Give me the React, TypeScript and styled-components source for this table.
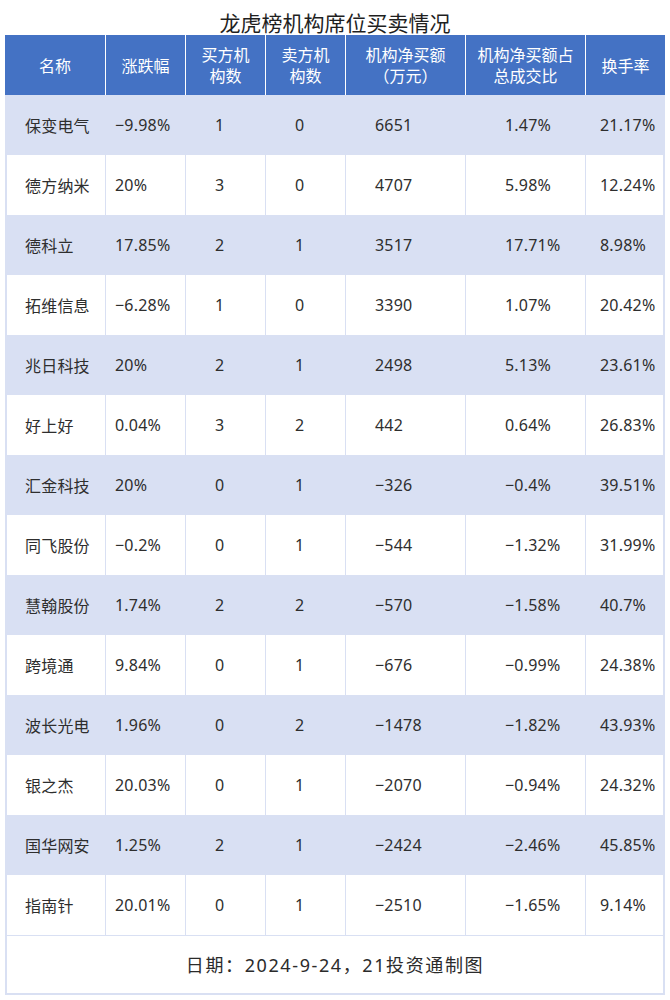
import React from "react";
import styled, { createGlobalStyle } from "styled-components";

const Global = createGlobalStyle`
  html, body { margin: 0; padding: 0; background: #ffffff; }
  body { font-family: "Noto Sans", "Noto Sans CJK SC", sans-serif; }
  * { box-sizing: border-box; }
`;

const COLS = "100px 80px 80px 80px 120px 120px 80px";
const BAND = "#d9e0f3";
const PADS = [18, 9, 29, 29, 29, 39, 14];

const Page = styled.div`
  width: 670px;
  padding: 0 5px;
`;

const Title = styled.div`
  height: 35px;
  padding-top: 10px;
  line-height: 25px;
  text-align: center;
  font-size: 21px;
  color: #1f1f1f;
  font-family: "Noto Sans CJK SC", sans-serif;
`;

const Table = styled.div`
  width: 660px;
  display: flex;
  flex-direction: column;
`;

const HeadRow = styled.div`
  display: grid;
  grid-template-columns: ${COLS};
  height: 60px;
  background: #4472c4;
`;

const HeadCell = styled.div<{ $first?: boolean }>`
  display: flex;
  align-items: center;
  justify-content: center;
  text-align: center;
  color: #ffffff;
  font-size: 16px;
  line-height: 21px;
  font-family: "Noto Sans CJK SC", sans-serif;
  text-spacing-trim: space-all;
  border-left: ${(p) => (p.$first ? "none" : "1px solid #ffffff")};
`;

const Row = styled.div<{ $band: boolean }>`
  display: grid;
  grid-template-columns: ${COLS};
  height: 60px;
  background: ${(p) => (p.$band ? BAND : "#ffffff")};
`;

const Cell = styled.div<{ $pad: number; $first?: boolean; $last?: boolean }>`
  display: flex;
  align-items: center;
  padding-left: ${(p) => p.$pad}px;
  font-size: 16px;
  color: #2e2e2e;
  white-space: nowrap;
  letter-spacing: 0.2px;
  border-left: ${(p) => (p.$first ? `2px solid ${BAND}` : `1px solid ${BAND}`)};
  border-right: ${(p) => (p.$last ? `2px solid ${BAND}` : "none")};
`;

const Footer = styled.div`
  height: 60px;
  display: flex;
  align-items: center;
  justify-content: center;
  border: 2px solid ${BAND};
  border-top: 1px solid ${BAND};
  font-size: 18px;
  letter-spacing: 1.6px;
  color: #2b2b2b;
  padding-bottom: 1px;
  text-spacing-trim: space-all;
`;

const headers: React.ReactNode[] = [
  "名称",
  "涨跌幅",
  <>买方机<br />构数</>,
  <>卖方机<br />构数</>,
  <>机构净买额<br />（万元）</>,
  <>机构净买额占<br />总成交比</>,
  "换手率",
];

const rows: string[][] = [
  ["保变电气", "−9.98%", "1", "0", "6651", "1.47%", "21.17%"],
  ["德方纳米", "20%", "3", "0", "4707", "5.98%", "12.24%"],
  ["德科立", "17.85%", "2", "1", "3517", "17.71%", "8.98%"],
  ["拓维信息", "−6.28%", "1", "0", "3390", "1.07%", "20.42%"],
  ["兆日科技", "20%", "2", "1", "2498", "5.13%", "23.61%"],
  ["好上好", "0.04%", "3", "2", "442", "0.64%", "26.83%"],
  ["汇金科技", "20%", "0", "1", "−326", "−0.4%", "39.51%"],
  ["同飞股份", "−0.2%", "0", "1", "−544", "−1.32%", "31.99%"],
  ["慧翰股份", "1.74%", "2", "2", "−570", "−1.58%", "40.7%"],
  ["跨境通", "9.84%", "0", "1", "−676", "−0.99%", "24.38%"],
  ["波长光电", "1.96%", "0", "2", "−1478", "−1.82%", "43.93%"],
  ["银之杰", "20.03%", "0", "1", "−2070", "−0.94%", "24.32%"],
  ["国华网安", "1.25%", "2", "1", "−2424", "−2.46%", "45.85%"],
  ["指南针", "20.01%", "0", "1", "−2510", "−1.65%", "9.14%"],
];

export default function App() {
  return (
    <Page>
      <Global />
      <Title>龙虎榜机构席位买卖情况</Title>
      <Table>
        <HeadRow>
          {headers.map((h, i) => (
            <HeadCell key={i} $first={i === 0}>
              <span>{h}</span>
            </HeadCell>
          ))}
        </HeadRow>
        {rows.map((r, ri) => (
          <Row key={ri} $band={ri % 2 === 0}>
            {r.map((v, ci) => (
              <Cell key={ci} $pad={PADS[ci]} $first={ci === 0} $last={ci === r.length - 1}>
                {v}
              </Cell>
            ))}
          </Row>
        ))}
        <Footer>日期：2024-9-24，21投资通制图</Footer>
      </Table>
    </Page>
  );
}
